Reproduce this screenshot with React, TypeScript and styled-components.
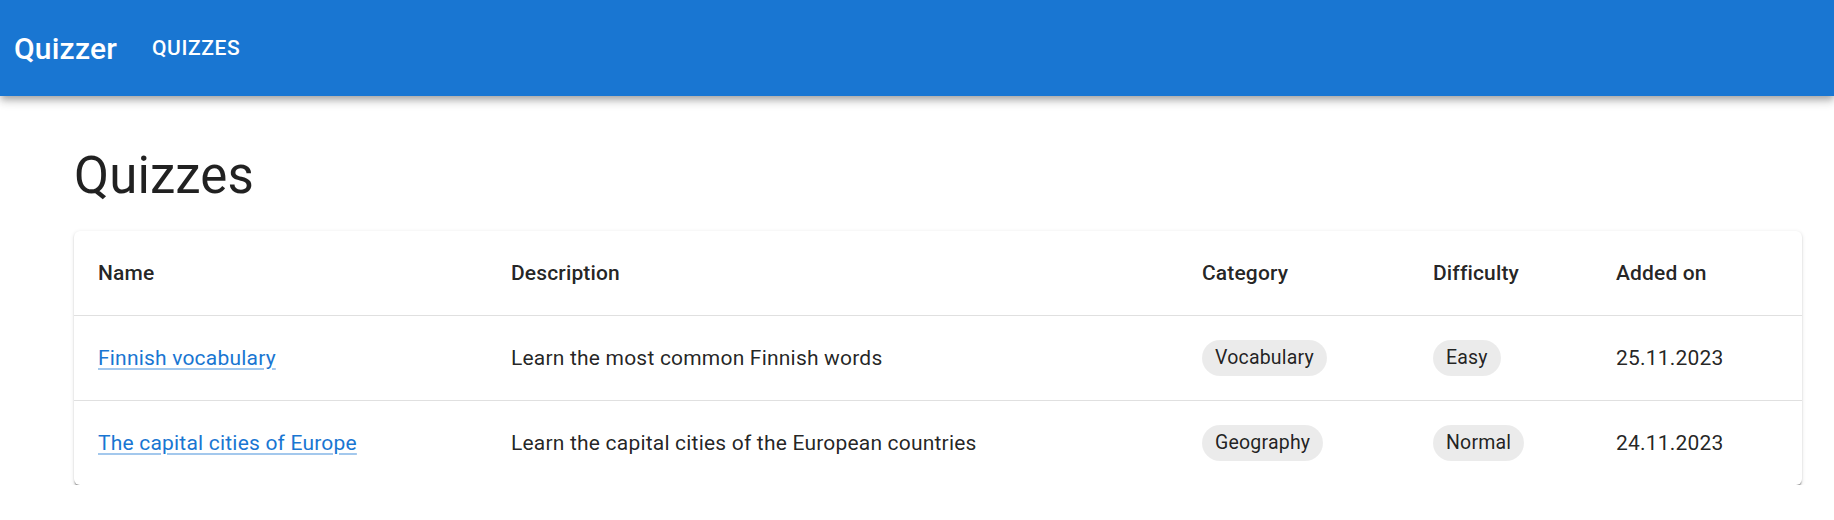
import React from 'react';
import styled, { createGlobalStyle } from 'styled-components';

const GlobalStyle = createGlobalStyle`
  body {
    margin: 0;
    background: #fff;
    font-family: Roboto, 'Helvetica Neue', Arial, sans-serif;
    color: rgba(0, 0, 0, 0.87);
  }
`;

const AppBar = styled.header`
  height: 96px;
  background: #1976d2;
  color: #fff;
  display: flex;
  align-items: center;
  padding: 0 14px;
  box-shadow: 0 3px 6px -1.5px rgba(0, 0, 0, 0.2), 0 6px 7.5px 0 rgba(0, 0, 0, 0.14),
    0 1.5px 15px 0 rgba(0, 0, 0, 0.12);
  position: relative;
  z-index: 2;
`;

const Brand = styled.div`
  font-size: 30px;
  font-weight: 500;
  letter-spacing: 0.2px;
  margin-right: 23px;
`;

const NavButton = styled.button`
  background: none;
  border: 0;
  color: #fff;
  font-family: Roboto, sans-serif;
  font-size: 21px;
  font-weight: 500;
  letter-spacing: 0.6px;
  text-transform: uppercase;
  padding: 9px 12px;
  line-height: 1.75;
  cursor: pointer;
`;

const Main = styled.main`
  padding: 48px 32px 0 74px;
`;

const Heading = styled.h1`
  margin: 0 0 24px;
  font-size: 51px;
  font-weight: 400;
  line-height: 63px;
  letter-spacing: 0.1px;
`;

const Paper = styled.div`
  background: #fff;
  border-radius: 6px;
  overflow: hidden;
  box-shadow: 0 3px 1.5px -1.5px rgba(0, 0, 0, 0.25), 0 1.5px 1.5px 0 rgba(0, 0, 0, 0.14),
    0 1.5px 4.5px 0 rgba(0, 0, 0, 0.12);
`;

const Table = styled.table`
  width: 100%;
  border-collapse: collapse;
  table-layout: fixed;
`;

const HeadCell = styled.th`
  text-align: left;
  font-size: 21px;
  font-weight: 500;
  line-height: 36px;
  padding: 24px;
  border-bottom: 1px solid #e0e0e0;
  letter-spacing: 0.15px;
`;

const Row = styled.tr`
  &:last-child td {
    border-bottom: 0;
  }
`;

const Cell = styled.td`
  font-size: 21px;
  line-height: 30px;
  padding: 24px;
  height: 36px;
  vertical-align: middle;
  border-bottom: 1px solid #e0e0e0;
  letter-spacing: 0.2px;
`;

const QuizLink = styled.a`
  color: #1976d2;
  text-decoration: underline;
  text-decoration-color: rgba(25, 118, 210, 0.4);
  text-underline-offset: 3px;
`;

const Chip = styled.span`
  display: inline-flex;
  align-items: center;
  height: 36px;
  padding: 0 13px;
  border-radius: 18px;
  background: rgba(0, 0, 0, 0.08);
  font-size: 19.5px;
  vertical-align: middle;
`;

const columns = [
  { label: 'Name', width: 413 },
  { label: 'Description', width: 691 },
  { label: 'Category', width: 231 },
  { label: 'Difficulty', width: 183 },
  { label: 'Added on', width: 210 },
];

const quizzes = [
  {
    name: 'Finnish vocabulary',
    description: 'Learn the most common Finnish words',
    category: 'Vocabulary',
    difficulty: 'Easy',
    added: '25.11.2023',
  },
  {
    name: 'The capital cities of Europe',
    description: 'Learn the capital cities of the European countries',
    category: 'Geography',
    difficulty: 'Normal',
    added: '24.11.2023',
  },
];

const App = () => (
  <>
    <GlobalStyle />
    <AppBar>
      <Brand>Quizzer</Brand>
      <NavButton>Quizzes</NavButton>
    </AppBar>
    <Main>
      <Heading>Quizzes</Heading>
      <Paper>
        <Table>
          <colgroup>
            {columns.map((c) => (
              <col key={c.label} style={{ width: c.width }} />
            ))}
          </colgroup>
          <thead>
            <tr>
              {columns.map((c) => (
                <HeadCell key={c.label}>{c.label}</HeadCell>
              ))}
            </tr>
          </thead>
          <tbody>
            {quizzes.map((q) => (
              <Row key={q.name}>
                <Cell>
                  <QuizLink href="#">{q.name}</QuizLink>
                </Cell>
                <Cell>{q.description}</Cell>
                <Cell>
                  <Chip>{q.category}</Chip>
                </Cell>
                <Cell>
                  <Chip>{q.difficulty}</Chip>
                </Cell>
                <Cell>{q.added}</Cell>
              </Row>
            ))}
          </tbody>
        </Table>
      </Paper>
    </Main>
  </>
);

export default App;
